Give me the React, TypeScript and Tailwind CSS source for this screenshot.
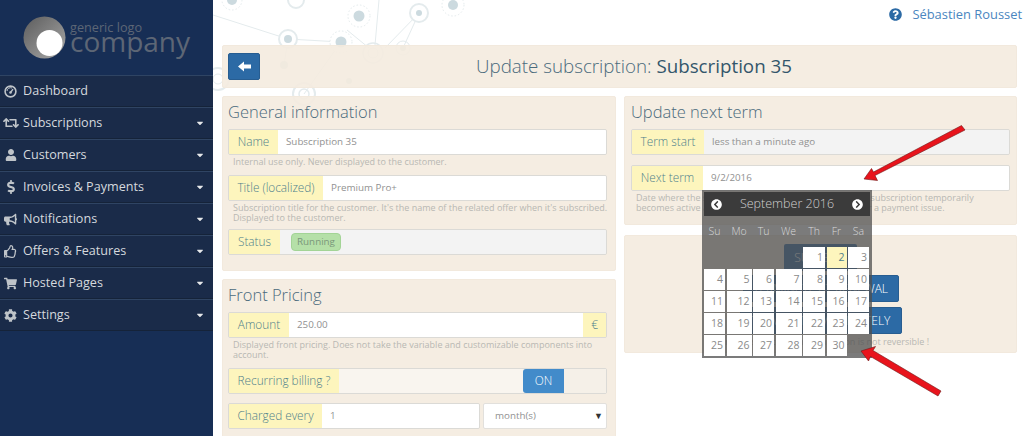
import React from "react";
import { FaRetweet, FaUser, FaBullhorn, FaRegThumbsUp, FaShoppingCart, FaCog, FaDollarSign, FaQuestionCircle, FaCaretDown, FaChevronCircleLeft, FaChevronCircleRight } from "react-icons/fa";

function Gauge() {
  return (
    <svg width="13" height="13" viewBox="0 0 13 13" fill="none">
      <circle cx="6.5" cy="6.5" r="5.4" stroke="#bfc4c9" strokeWidth="1.6" />
      <path d="M6.5 7.5 L9 4.2" stroke="#bfc4c9" strokeWidth="1.4" />
      <path d="M3 6 A3.6 3.6 0 0 1 8 3" stroke="#bfc4c9" strokeWidth="1" />
      <circle cx="6.5" cy="7.5" r="1.3" fill="#bfc4c9" />
    </svg>
  );
}

const menu: [string, React.ReactNode, boolean][] = [
  ["Dashboard", <Gauge />, false],
  ["Subscriptions", <FaRetweet size={16} />, true],
  ["Customers", <FaUser size={12} />, true],
  ["Invoices & Payments", <FaDollarSign size={14} />, true],
  ["Notifications", <FaBullhorn size={13} />, true],
  ["Offers & Features", <FaRegThumbsUp size={13} />, true],
  ["Hosted Pages", <FaShoppingCart size={13} />, true],
  ["Settings", <FaCog size={13} />, true],
];

function Sidebar() {
  return (
    <aside className="w-[213px] h-[436px] shrink-0 bg-[#172e55] relative z-10">
      <div className="h-[75px] flex items-start pl-[23px] pt-[16px]">
        <svg width="43" height="43" viewBox="0 0 43 43" className="shrink-0">
          <defs>
            <linearGradient id="logoG" x1="0" y1="0" x2="1" y2="1">
              <stop offset="0" stopColor="#5c5c5c" />
              <stop offset="1" stopColor="#a9a9a9" />
            </linearGradient>
          </defs>
          <circle cx="21.5" cy="21.5" r="21" fill="url(#logoG)" />
          <circle cx="26.5" cy="27" r="13" fill="#ffffff" />
        </svg>
        <div className="ml-[4px] flex flex-col text-[#5d6675] leading-none">
          <span className="text-[12.7px] mt-[5px] leading-[12px]">generic logo</span>
          <span className="text-[28px] mt-[-7px] leading-[30px]">company</span>
        </div>
      </div>
      <nav className="flex flex-col">
        {menu.map(([label, icon, caret]) => (
          <div key={label} className="h-[32px] flex items-center bg-[#1a2b49] border-t border-t-[#2f4463] border-b border-b-[#152339] text-[#d5d9de] text-[12.6px]">
            <span className="w-[21px] mr-[2px] flex justify-center shrink-0 text-[#bfc4c9]">{icon}</span>
            <span className="flex-1">{label}</span>
            {caret && <FaCaretDown size={10} className="mr-[8px] text-[#e6e8ea]" />}
          </div>
        ))}
      </nav>
    </aside>
  );
}

function Network() {
  return (
    <svg className="absolute left-0 top-0 pointer-events-none" width="480" height="120" viewBox="214 0 480 120" fill="none">
      <g stroke="#e4ebed" strokeWidth="1">
        <path d="M214 15 L289 39 L342 42 M380 0 L376 45 M420 13 L386 48 M404 48 L420 13 M305 94 L342 42 M289 39 L285 65 M348 30 L370 48" />
        <circle cx="360" cy="16" r="11" strokeDasharray="1.5 2" />
        <circle cx="342" cy="42" r="11" strokeDasharray="1.5 2" fill="#fff" />
        <circle cx="454" cy="5" r="11" strokeDasharray="1.5 2" />
        <circle cx="233" cy="0" r="10" strokeDasharray="1.5 2" />
        <circle cx="297" cy="0" r="8" strokeWidth="2" />
        <circle cx="420" cy="13" r="9" strokeWidth="2" fill="#fff" />
        <circle cx="289" cy="39" r="9" strokeWidth="2" fill="#fff" />
        <circle cx="374" cy="53" r="10" strokeWidth="1.5" />
        <circle cx="374" cy="53" r="5" />
        <circle cx="404" cy="48" r="7" />
        <circle cx="305" cy="94" r="11" strokeWidth="2" />
        <circle cx="305" cy="94" r="5" strokeWidth="1.5" />
        <circle cx="219" cy="79" r="11" strokeWidth="2" />
        <circle cx="219" cy="79" r="5" />
      </g>
      <g fill="#ccdadf">
        <circle cx="360" cy="16" r="5.5" />
        <circle cx="342" cy="42" r="5.5" />
        <circle cx="454" cy="5" r="5" />
        <circle cx="233" cy="0" r="5" />
        <circle cx="420" cy="13" r="3" />
        <circle cx="289" cy="39" r="4" />
        <circle cx="404" cy="48" r="3" />
        <circle cx="285" cy="65" r="4" />
        <circle cx="350" cy="81" r="3" />
      </g>
    </svg>
  );
}

const panel = "bg-[#f4ebdf]/90 rounded-[2px] border border-[#f2e9dd]";
const groupCls = "flex h-[26px] border border-[#dbdad6] rounded-[2px] overflow-hidden text-[11.8px]";
const labelCls = "h-full flex items-center justify-center bg-[#fdf5bd] text-[#4f7f8c] shrink-0 font-light";
const valueCls = "flex-1 h-full flex items-center text-[9.8px] text-[#919191] min-w-0";

function Group({ label, value, w, disabled, suffix }: { label: string; value?: string; w: number; disabled?: boolean; suffix?: string }) {
  return (
    <div className={groupCls}>
      <span className={labelCls} style={{ width: w }}>{label}</span>
      <span className={`${valueCls} pl-[8px] ${disabled ? "bg-[#f3f3f3]" : "bg-white"}`}>{value}</span>
      {suffix && <span className={`${labelCls} w-[23px]`}>{suffix}</span>}
    </div>
  );
}

function Help({ children, className = "" }: { children: React.ReactNode; className?: string }) {
  return <p className={`text-[9px] leading-[10px] text-[#b8b8b3] pl-[5px] mt-[2px] whitespace-nowrap ${className}`}>{children}</p>;
}

function Heading({ children }: { children: React.ReactNode }) {
  return <h2 className="text-[16.5px] leading-[24px] font-light text-[#4a6a7c] mb-[5px]">{children}</h2>;
}

function LeftColumn() {
  return (
    <div className="flex flex-col gap-[8px] min-w-0">
      <section className={`${panel} h-[175px] pl-[5px] pr-[8px] pt-[3px]`}>
        <Heading>General information</Heading>
        <Group label="Name" value="Subscription 35" w={49} />
        <Help className="mb-[8px]">Internal use only. Never displayed to the customer.</Help>
        <Group label="Title (localized)" value="Premium Pro+" w={94} />
        <Help className="mb-[6px]">Subscription title for the customer. It's the name of the related offer when it's subscribed.<br />Displayed to the customer.</Help>
        <div className={groupCls}>
          <span className={labelCls} style={{ width: 51 }}>Status</span>
          <span className="flex-1 h-full bg-[#f3f3f3] flex items-center pl-[11px]">
            <span className="h-[18px] w-[50px] rounded-[4px] bg-[#b5e0a8] border border-[#a3d496] text-[9.8px] text-[#7a967a] flex items-center justify-center">Running</span>
          </span>
        </div>
      </section>
      <section className={`${panel} h-[170px] pl-[5px] pr-[8px] pt-[3px]`}>
        <Heading>Front Pricing</Heading>
        <Group label="Amount" value="250.00" w={60} suffix="€" />
        <Help className="mb-[8px]">Displayed front pricing. Does not take the variable and customizable components into<br />account.</Help>
        <div className={`${groupCls} mb-[9px]`}>
          <span className={labelCls} style={{ width: 110 }}>Recurring billing ?</span>
          <span className="flex-1 bg-[#f9f5ef] flex justify-end">
            <span className="w-[41px] bg-[#428bca] text-white text-[11.8px] font-light flex items-center justify-center rounded-l-[3px]">ON</span>
            <span className="w-[42px] bg-[#f5f0e8]" />
          </span>
        </div>
        <div className="flex gap-[3px] h-[26px]">
          <div className={`${groupCls} flex-1`}>
            <span className={labelCls} style={{ width: 93 }}>Charged every</span>
            <span className={`${valueCls} pl-[8px] bg-white`}>1</span>
          </div>
          <div className="w-[124px] h-full bg-white border border-[#e2e0dc] rounded-[2px] flex items-center justify-between pl-[11px] pr-[3px] text-[9.8px] text-[#919191]">
            <span>month(s)</span>
            <span className="text-[9px] text-[#333]">▼</span>
          </div>
        </div>
      </section>
    </div>
  );
}

const colW = "grid-cols-[21px_25px_21px_26px_22px_20px_21px]";
const days: (number | null)[] = [null, null, null, null, 1, 2, 3];
for (let d = 4; d <= 30; d++) days.push(d);

function Calendar() {
  return (
    <div className="absolute left-[489px] top-[190px] w-[170px] h-[168px] bg-[#4f4f4f]/75 z-20 text-white">
      <div className="mx-[2px] mt-[2px] h-[24px] bg-[#3b3b3b] flex items-center justify-between px-[7px] text-[#d0d0d0] text-[12.5px]">
        <FaChevronCircleLeft size={11} className="text-white" />
        <span className="font-light">September 2016</span>
        <FaChevronCircleRight size={11} className="text-white" />
      </div>
      <div className={`grid ${colW} gap-x-[1.5px] ml-[2px] mt-[8px] h-[22px] text-[10.5px] text-[#d8d8d8] text-center font-light`}>
        {["Su", "Mo", "Tu", "We", "Th", "Fr", "Sa"].map((d) => <span key={d}>{d}</span>)}
      </div>
      <div className={`grid ${colW} gap-x-[1.5px] gap-y-[1px] ml-[2px] mt-[1px] auto-rows-[21px]`}>
        {days.map((d, i) =>
          d === null ? <span key={i} /> : (
            <span key={i} className={`flex items-center justify-end pr-[2px] text-[10.5px] ${d === 2 ? "bg-[#fdf5bd] text-[#4f7f8c]" : "bg-white text-[#8a8a8a]"}`}>{d}</span>
          )
        )}
      </div>
    </div>
  );
}

function RightColumn() {
  return (
    <div className="flex flex-col gap-[10px] min-w-0">
      <section className={`${panel} h-[129px] px-[6px] pt-[3px]`}>
        <Heading>Update next term</Heading>
        <Group label="Term start" value="less than a minute ago" w={72} disabled />
        <div className="h-[10px]" />
        <Group label="Next term" value="9/2/2016" w={71} />
        <Help>Date where the subscription will be renewed unless the subscription temporarily<br />becomes active again until a further attempt is made for a payment issue.</Help>
      </section>
      <section className={`${panel} h-[118px] flex flex-col items-center pt-[8px] text-white text-[12px] font-light`}>
        <span className="h-[27px] w-[73px] bg-[#2c6aa5] rounded-[2px] flex items-center justify-center mb-[4px]">SUSPEND</span>
        <span className="h-[27px] w-[156px] bg-[#2c6aa5] border border-[#275d91] rounded-[2px] flex items-center justify-center mb-[5px] whitespace-nowrap">TERMINATE AT RENEWAL</span>
        <span className="h-[27px] w-[162px] bg-[#2c6aa5] border border-[#275d91] rounded-[2px] flex items-center justify-center whitespace-nowrap">TERMINATE IMMEDIATELY</span>
        <span className="text-[9px] font-normal text-[#b8b8b3] mt-[1px] whitespace-nowrap">Warning: subscription termination is not reversible !</span>
      </section>
    </div>
  );
}

function Arrow({ d }: { d: string }) {
  return <path d={d} fill="#e8141c" stroke="#6e1818" strokeWidth="0.6" strokeLinejoin="round" />;
}

export default function App() {
  return (
    <div className="w-[1024px] h-[436px] overflow-hidden flex bg-white" style={{ fontFamily: '"Open Sans", "Noto Sans", sans-serif' }}>
      <Sidebar />
      <main className="relative flex-1 min-w-0 h-[436px] overflow-hidden">
        <Network />
        <div className="relative h-[45px] flex items-start justify-end pt-[5px] pr-[2px] text-[12.9px] text-[#4a86c0]">
          <FaQuestionCircle size={13} className="text-[#2c6aa5] mt-[3px] mr-[10px]" />
          <span>Sébastien Rousset</span>
        </div>
        <div className="relative ml-[9px] mr-[7px]">
          <header className={`${panel} h-[43px] flex items-center pl-[5px]`}>
            <button className="w-[32px] h-[27px] bg-[#2c6aa5] border border-[#275d91] rounded-[2px] flex items-center justify-center">
              <svg width="13" height="11" viewBox="0 0 13 11"><path d="M0 5.5 L6 0.5 V3.5 H13 V7.5 H6 V10.5 Z" fill="#ffffff" /></svg>
            </button>
            <h1 className="ml-[216px] text-[18.75px] font-light text-[#4a6a7c] whitespace-nowrap">
              Update subscription: <span className="font-normal text-[#33566b]">Subscription 35</span>
            </h1>
          </header>
          <div className="grid grid-cols-[394px_393px] gap-x-[8px] mt-[8px]">
            <LeftColumn />
            <RightColumn />
          </div>
        </div>
        <Calendar />
        <svg className="absolute left-0 top-0 z-30 pointer-events-none" width="811" height="436" viewBox="213 0 811 436" fill="none">
          <Arrow d="M961.5 125.5 L965 130 L875 175.5 L877.5 180.5 L864 179 L871.5 168.5 L873.5 172 Z" />
          <Arrow d="M938 396 L941 391 L873 350.5 L875.5 346.5 L861 351 L868.5 361 L870.5 356.5 Z" />
        </svg>
      </main>
    </div>
  );
}
